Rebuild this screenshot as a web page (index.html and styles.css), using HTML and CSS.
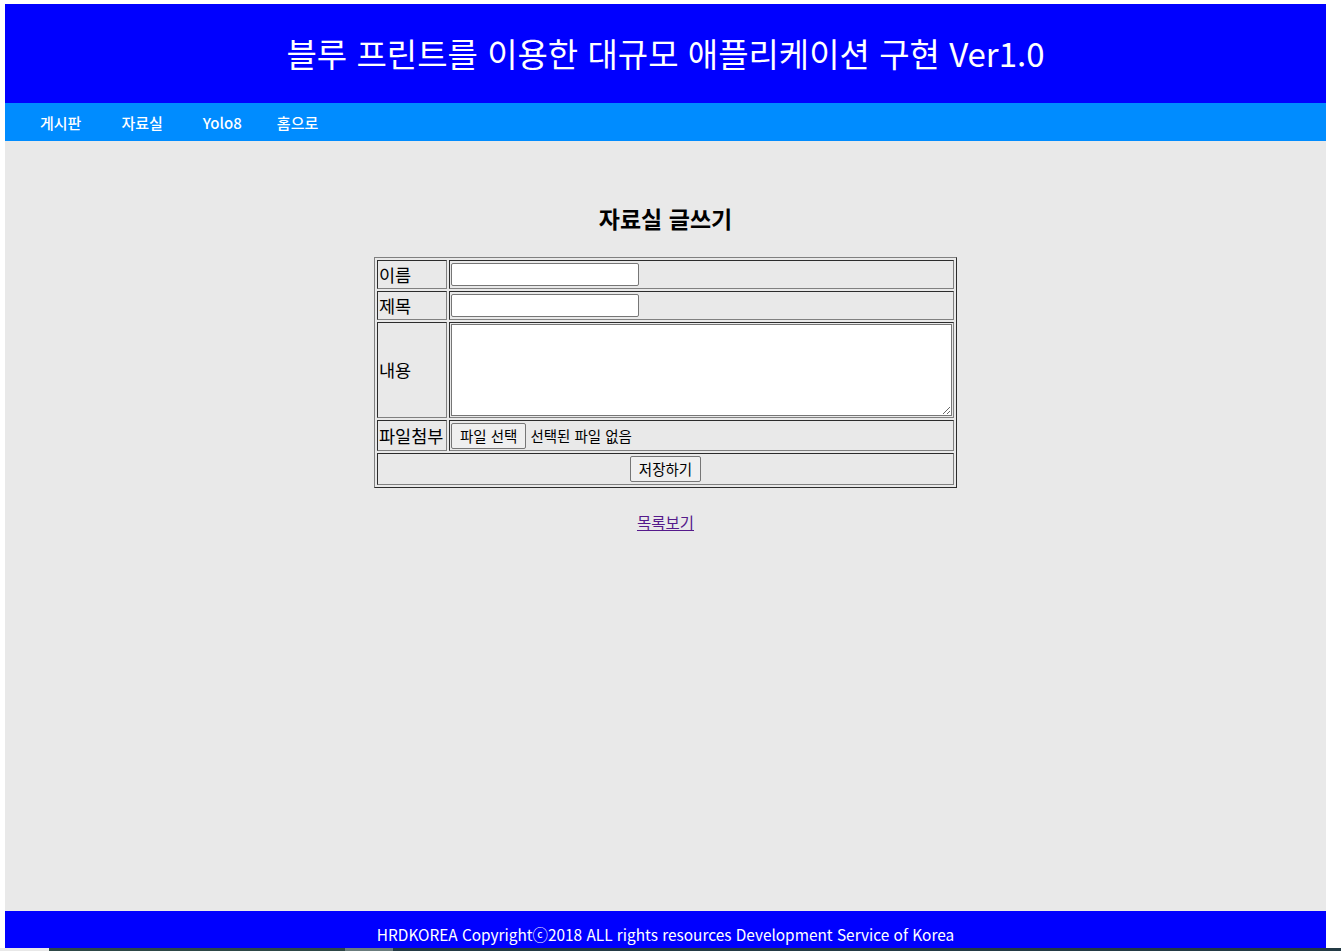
FILE: index.html
```html
<!DOCTYPE html>
<html lang="ko">
<head>
<meta charset="utf-8">
<title>자료실 글쓰기</title>
<link rel="stylesheet" href="styles.css">
</head>
<body>
<div class="page">
  <header class="site-header">블루 프린트를 이용한 대규모 애플리케이션 구현 Ver1.0</header>
  <nav class="site-nav">
    <a class="nav-item">게시판</a>
    <a class="nav-item">자료실</a>
    <a class="nav-item">Yolo8</a>
    <a class="nav-item">홈으로</a>
  </nav>
  <main class="content">
    <h3 class="title">자료실 글쓰기</h3>
    <table class="form-table">
      <tr class="row-short">
        <td class="label">이름</td>
        <td class="value"><input class="text-input" type="text"></td>
      </tr>
      <tr class="row-short">
        <td class="label">제목</td>
        <td class="value"><input class="text-input" type="text"></td>
      </tr>
      <tr>
        <td class="label">내용</td>
        <td class="value"><textarea class="text-area"></textarea></td>
      </tr>
      <tr class="row-file">
        <td class="label">파일첨부</td>
        <td class="value"><button class="btn" type="button">파일 선택</button><span class="file-text">선택된 파일 없음</span></td>
      </tr>
      <tr>
        <td class="submit-cell" colspan="2"><button class="btn" type="button">저장하기</button></td>
      </tr>
    </table>
    <a class="list-link" href="#">목록보기</a>
  </main>
  <footer class="site-footer">HRDKOREA Copyrightⓒ2018 ALL rights resources Development Service of Korea</footer>
</div>
<div class="taskbar">
  <div class="tb-a"></div>
  <div class="tb-b"></div>
  <div class="tb-c"></div>
  <div class="tb-d"></div>
</div>
</body>
</html>
```
FILE: styles.css
```css
html, body {
  margin: 0;
  padding: 0;
  background: #ffffff;
  overflow: hidden;
}
body {
  font-family: "Noto Sans CJK KR", "Noto Sans", sans-serif;
  width: 1341px;
  height: 951px;
}
.page {
  margin: 4px 0 0 5px;
  width: 1321px;
  display: flex;
  flex-direction: column;
}
.site-header {
  height: 99px;
  background: #0000ff;
  color: #ffffff;
  font-size: 33px;
  display: flex;
  align-items: center;
  justify-content: center;
  padding-bottom: 1px;
  box-sizing: border-box;
}
.site-nav {
  height: 38px;
  background: #008cff;
  display: flex;
  align-items: center;
  padding-left: 35px;
  gap: 40px;
}
.nav-item {
  color: #ffffff;
  font-size: 15px;
  font-weight: 500;
  text-decoration: none;
}
.nav-item:nth-child(4) {
  margin-left: -5px;
}
.content {
  height: 770px;
  background: #e9e9e9;
  display: flex;
  flex-direction: column;
  align-items: center;
  box-sizing: border-box;
  padding-top: 61px;
}
.title {
  margin: 0 0 23px 0;
  font-size: 23px;
  font-weight: bold;
  line-height: 32px;
  color: #000;
}
.form-table {
  width: 583px;
  border: 1px outset #808080;
  border-spacing: 2px;
  font-size: 17.5px;
  color: #000;
}
.form-table td {
  border: 1px inset #808080;
  padding: 1px;
  line-height: 22px;
}
.row-short td {
  height: 25px;
}
.form-table .label {
  width: 65px;
  padding-right: 2px;
  white-space: nowrap;
}
.text-input {
  display: block;
  width: 188px;
  height: 23px;
  box-sizing: border-box;
  border: 1px solid #767676;
  border-radius: 2px;
  background: #fff;
  margin: 0;
}
.text-area {
  display: block;
  width: 100%;
  height: 92px;
  box-sizing: border-box;
  border: 1px solid #767676;
  background: #fff;
  margin: 0;
  resize: vertical;
}
.row-file td {
  height: 27px;
}
.btn {
  font-family: "Noto Sans CJK KR", "Noto Sans", sans-serif;
  font-size: 14.5px;
  height: 26px;
  padding: 0 8px;
  background: #efefef;
  border: 1px solid #767676;
  border-radius: 2px;
  color: #000;
  vertical-align: middle;
  margin: 0;
  line-height: 20px;
}
.file-text {
  font-size: 14.5px;
  margin-left: 4px;
  vertical-align: middle;
}
.submit-cell {
  text-align: center;
  height: 28px;
}
.list-link {
  margin-top: 23px;
  font-size: 15.5px;
  line-height: 22px;
  color: #551a8b;
  text-decoration: underline;
}
.site-footer {
  height: 37px;
  background: #0000ff;
  color: #ffffff;
  font-size: 15.4px;
  display: flex;
  align-items: flex-end;
  justify-content: center;
  padding-bottom: 3px;
  box-sizing: border-box;
}
.taskbar {
  display: flex;
  height: 3px;
}
.tb-a { width: 49px; background: #e8e8e8; }
.tb-b { width: 296px; background: #2d4746; }
.tb-c { width: 48px; background: #6b7d7d; }
.tb-d { flex: 1; background: #233a44; }
```
